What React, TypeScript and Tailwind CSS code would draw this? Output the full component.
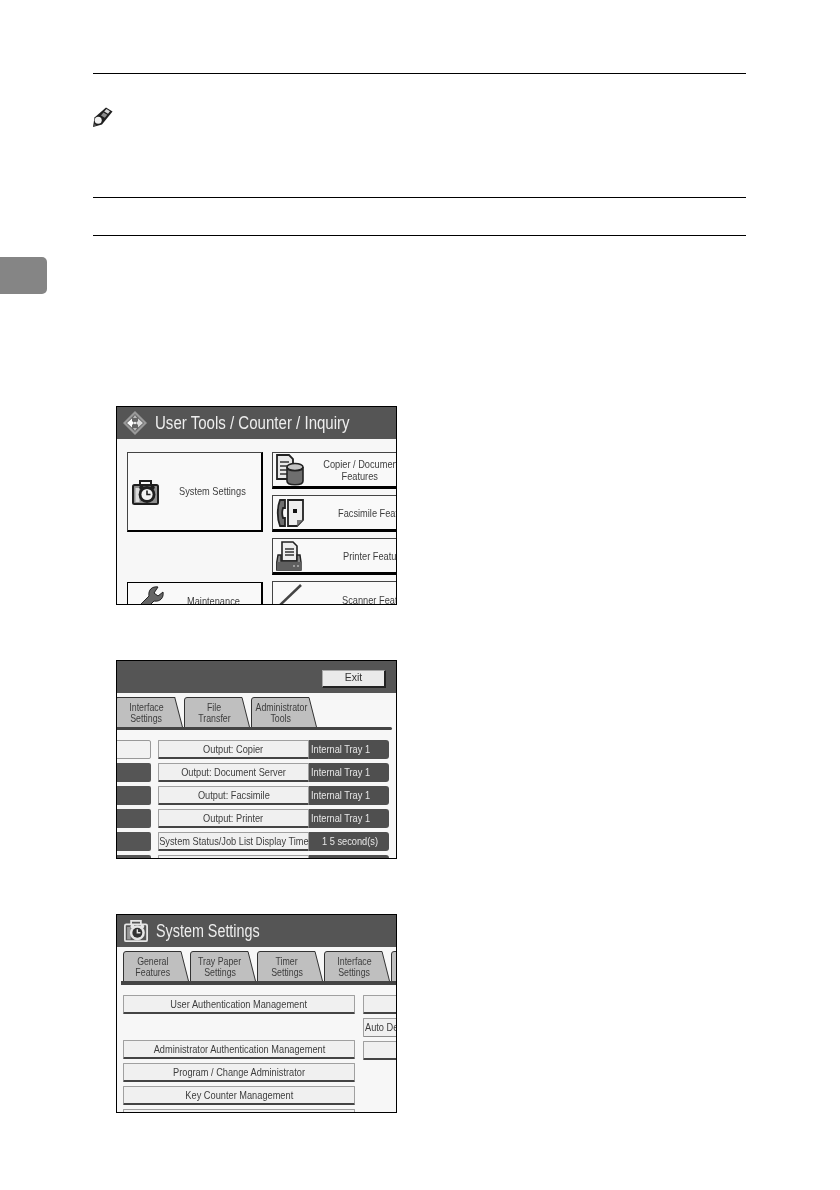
import type { ReactNode } from "react";

function Pencil() {
  return (
    <svg width="20" height="20" viewBox="0 0 20 20" className="block">
      <path d="M13 0.5 L19.5 4.5 L9 17.5 L0 20 L1.5 10.5 Z" fill="#1f1f1f" />
      <path d="M13.5 2 L17 4.2 L15 6.8 L11.2 4.6 Z" fill="#d8d8d8" />
      <path d="M10.5 5.5 L14.3 7.8 L11.8 10.8 L8 8.6 Z" fill="#8c8c8c" />
      <circle cx="5.2" cy="13.2" r="3.5" fill="#f2f2f2" />
      <path d="M0.5 19.5 L1.5 16.5 L3.5 18.5 Z" fill="#555" />
    </svg>
  );
}

function DiamondIcon() {
  return (
    <svg width="24" height="24" viewBox="0 0 24 24" className="block">
      <path d="M12 0 L24 12 L12 24 L0 12 Z" fill="#9a9a9a" />
      <path d="M12 3 L21 12 L12 21 L3 12 Z" fill="#666" />
      <path d="M4 12 L9 7.5 L9 10 L11 12 L9 14 L9 16.5 Z" fill="#fff" />
      <path d="M20 12 L15 7.5 L15 10 L13 12 L15 14 L15 16.5 Z" fill="#ddd" />
      <path d="M12 4 L14 7 L10 7 Z M12 20 L14 17 L10 17 Z" fill="#bbb" />
      <circle cx="12" cy="12" r="1.2" fill="#eee" />
    </svg>
  );
}

function CaseClock({ size = 27, light = false }: { size?: number; light?: boolean }) {
  const edge = light ? "#e6e6e6" : "#1f1f1f";
  return (
    <svg width={size} height={size} viewBox="0 0 27 27" className="block">
      <path d="M8 6 V2 H19 V6" fill="none" stroke={edge} strokeWidth="2" />
      <rect x="1" y="6" width="25" height="19" rx="1.5" fill={light ? "#555" : "#8f8f8f"} stroke={edge} strokeWidth="2" />
      <rect x="3.5" y="9" width="4" height="14" fill={light ? "#999" : "#ddd"} />
      <circle cx="15" cy="15.5" r="8.4" fill={edge} />
      <circle cx="15" cy="15.5" r="5.6" fill={light ? "#333" : "#f2f2f2"} />
      <path d="M15 11.5 V15.5 H18.5" fill="none" stroke={edge} strokeWidth="1.6" />
      <circle cx="9.5" cy="8.5" r="2.2" fill={edge} />
      <circle cx="20.5" cy="8.5" r="2.2" fill={edge} />
    </svg>
  );
}

function DocDbIcon() {
  return (
    <svg width="28" height="32" viewBox="0 0 28 32" className="block">
      <path d="M1 1 H13 L17 5 V25 H1 Z" fill="#e8e8e8" stroke="#222" strokeWidth="1.8" />
      <path d="M4 8 H13 M4 12 H11 M4 16 H11 M4 20 H11" stroke="#333" strokeWidth="1.6" />
      <ellipse cx="19" cy="13" rx="8" ry="3.5" fill="#c4c4c4" stroke="#222" strokeWidth="1.6" />
      <path d="M11 13 V27 C11 32 27 32 27 27 V13 C27 18 11 18 11 13 Z" fill="#6e6e6e" stroke="#222" strokeWidth="1.6" />
    </svg>
  );
}

function FaxIcon() {
  return (
    <svg width="28" height="28" viewBox="0 0 28 28" className="block">
      <path d="M9 1 H4 C1 8 1 20 4 27 H9 V19 H7 C6 16 6 12 7 9 H9 Z" fill="#6e6e6e" stroke="#222" strokeWidth="1.8" />
      <path d="M12 1 H27 V21 L21 27 H12 Z" fill="#eee" stroke="#222" strokeWidth="1.8" />
      <path d="M27 21 H21 V27 Z" fill="#777" />
      <rect x="17" y="10" width="4" height="4" fill="#111" />
    </svg>
  );
}

function PrinterIcon() {
  return (
    <svg width="26" height="30" viewBox="0 0 26 30" className="block">
      <path d="M6 1 H17 L21 5 V20 H6 Z" fill="#eee" stroke="#222" strokeWidth="1.6" />
      <path d="M9 8 H18 M9 11 H18 M9 14 H18" stroke="#333" strokeWidth="1.4" />
      <path d="M5 14 H2 L0.8 21 V29 H25 V21 L24 14 H21 V20 H5 Z" fill="#888" stroke="#222" strokeWidth="1.4" />
      <path d="M1 21 H25 V29 H1 Z" fill="#5f5f5f" />
      <path d="M17 25 H19 M21 25 H23" stroke="#ddd" strokeWidth="1.2" />
    </svg>
  );
}

function WrenchIcon() {
  return (
    <svg width="24" height="24" viewBox="0 0 24 24" className="block">
      <path d="M23 6 L18 10 L14 7 L18 1 C12 0 8 4 9 10 L1 18 C-1 21 3 25 6 23 L14 15 C20 16 24 12 23 6 Z" fill="#666" stroke="#222" strokeWidth="1" />
    </svg>
  );
}

function ScannerIcon() {
  return (
    <svg width="30" height="24" viewBox="0 0 30 24" className="block">
      <path d="M2 23 L25 1" stroke="#444" strokeWidth="2.5" />
      <path d="M0 23 H30" stroke="#444" strokeWidth="3" />
    </svg>
  );
}

// the panel font is much narrower than anything installed
function Narrow({ children, left }: { children: ReactNode; left?: boolean }) {
  return (
    <span className={`inline-block whitespace-nowrap scale-x-[0.88] ${left ? "origin-left" : "origin-center"}`}>
      {children}
    </span>
  );
}

function Screen({ children }: { children: ReactNode }) {
  return (
    <div className="ml-[116px] w-[281px] h-[199px] border border-black bg-[#f7f7f7] overflow-hidden text-[#3d3d3d] blur-[0.45px]">
      {children}
    </div>
  );
}

function ScreenHeader({ children }: { children?: ReactNode }) {
  return <div className="h-[32px] bg-[#555555] text-[#eeeeee] flex items-center">{children}</div>;
}

function Tab({ label, second, width }: { label: string; second: string; width: number }) {
  return (
    <div className="relative h-[30px] shrink-0 text-center text-[10px] leading-[11px] pt-[5px]" style={{ width }}>
      <svg className="absolute inset-0 w-full h-full" viewBox="0 0 66 30" preserveAspectRatio="none">
        <path d="M0.5 30 V3 Q0.5 0.5 3 0.5 H58 L65.5 30" fill="#bfbfbf" stroke="#333" strokeWidth="1" />
      </svg>
      <div className="relative pr-[6px]">
        <div>
          <Narrow>{label}</Narrow>
        </div>
        <div>
          <Narrow>{second}</Narrow>
        </div>
      </div>
    </div>
  );
}

function LightButton({ children, className, left }: { children?: ReactNode; className: string; left?: boolean }) {
  return (
    <div className={`h-[19px] pt-px bg-[#f0f0f0] border border-[#a0a0a0] border-b-2 border-b-[#444] rounded-[1px] flex items-center justify-center text-[10.5px] whitespace-nowrap ${className}`}>
      {children && <Narrow left={left}>{children}</Narrow>}
    </div>
  );
}

function MenuButton({ icon, children }: { icon: ReactNode; children: ReactNode }) {
  return (
    <div className="h-[37px] w-[150px] shrink-0 bg-[#f9f9f9] border border-[#444] border-b-[3px] border-b-black flex items-center text-[10.5px] leading-[12px] whitespace-nowrap">
      <div className="w-[42px] pl-[3px] shrink-0">{icon}</div>
      {children}
    </div>
  );
}

function OutputRow({ label, value, first, spaced }: { label: string; value: string; first?: boolean; spaced?: boolean }) {
  return (
    <div className="flex h-[19px] gap-[7px]">
      <div className={`w-[35px] -ml-px rounded-r-[2px] ${first ? "bg-[#f2f2f2] border border-[#999]" : "bg-[#555]"}`} />
      <LightButton className="w-[151px] shrink-0">{label}</LightButton>
      <div className={`w-[80px] -ml-[7px] pt-px bg-[#4f4f4f] text-[#e8e8e8] rounded-r-[3px] flex items-center text-[10.5px] whitespace-nowrap ${spaced ? "pl-[13px]" : "pl-[2px]"}`}>
        <Narrow left>{value}</Narrow>
      </div>
    </div>
  );
}

function UserToolsScreen() {
  return (
    <Screen>
      <ScreenHeader>
        <div className="ml-[6px] mr-[8px]">
          <DiamondIcon />
        </div>
        <span className="inline-block whitespace-nowrap text-[17.5px] origin-left scale-x-[0.86]">
          User Tools / Counter / Inquiry
        </span>
      </ScreenHeader>
      <div className="flex gap-[9px] pl-[10px] pt-[13px]">
        <div className="w-[136px] shrink-0">
          <div className="h-[80px] pt-px bg-[#f9f9f9] border border-[#444] border-r-2 border-b-2 border-r-black border-b-black flex items-center text-[10.5px]">
            <div className="w-[51px] pl-[4px] shrink-0">
              <CaseClock />
            </div>
            <Narrow left>System Settings</Narrow>
          </div>
          <div className="mt-[50px] h-[60px] bg-[#f9f9f9] border border-black border-r-2 flex items-start text-[10.5px]">
            <div className="w-[59px] pl-[12px] pt-[3px] shrink-0">
              <WrenchIcon />
            </div>
            <span className="pt-[11px]">
              <Narrow left>Maintenance</Narrow>
            </span>
          </div>
        </div>
        <div className="flex flex-col gap-[6px]">
          <MenuButton icon={<DocDbIcon />}>
            <div className="w-[84px] ml-[3px] pt-px text-center">
              <div>
                <Narrow>Copier / Document</Narrow>
              </div>
              <div>
                <Narrow>Features</Narrow>
              </div>
            </div>
          </MenuButton>
          <MenuButton icon={<FaxIcon />}>
            <span className="pl-[23px]">
              <Narrow left>Facsimile Features</Narrow>
            </span>
          </MenuButton>
          <MenuButton icon={<PrinterIcon />}>
            <span className="pl-[28px] pt-px">
              <Narrow left>Printer Features</Narrow>
            </span>
          </MenuButton>
          <div className="h-[37px] w-[150px] bg-[#f9f9f9] border border-[#444] flex items-start text-[10.5px] whitespace-nowrap">
            <div className="w-[42px] pl-[3px] pt-[2px] shrink-0">
              <ScannerIcon />
            </div>
            <span className="pl-[27px] pt-[11px]">
              <Narrow left>Scanner Features</Narrow>
            </span>
          </div>
        </div>
      </div>
    </Screen>
  );
}

function OutputScreen() {
  return (
    <Screen>
      <ScreenHeader>
        <div className="ml-[205px] mt-[3px] w-[64px] h-[18px] bg-[#eaeaea] border border-[#aaa] border-r-2 border-b-2 border-r-[#222] border-b-[#222] flex items-center justify-center text-[10.5px] text-[#333]">
          Exit
        </div>
      </ScreenHeader>
      <div className="flex pt-[4px] -ml-[2px] gap-[1px]">
        <Tab label="Interface" second="Settings" width={68} />
        <Tab label="File" second="Transfer" width={66} />
        <Tab label="Administrator" second="Tools" width={66} />
      </div>
      <div className="h-[3px] w-[275px] bg-[#444] rounded-r-full" />
      <div className="mt-[10px] flex flex-col gap-[4px]">
        <OutputRow first label="Output: Copier" value="Internal Tray 1" />
        <OutputRow label="Output: Document Server" value="Internal Tray 1" />
        <OutputRow label="Output: Facsimile" value="Internal Tray 1" />
        <OutputRow label="Output: Printer" value="Internal Tray 1" />
        <OutputRow spaced label="System Status/Job List Display Time" value="1 5 second(s)" />
        <OutputRow label="" value="" />
      </div>
    </Screen>
  );
}

function SystemSettingsScreen() {
  return (
    <Screen>
      <ScreenHeader>
        <div className="ml-[7px] mr-[8px]">
          <CaseClock size={24} light />
        </div>
        <span className="inline-block whitespace-nowrap text-[17.5px] origin-left scale-x-[0.82]">
          System Settings
        </span>
      </ScreenHeader>
      <div className="flex pt-[4px] pl-[6px] gap-[1px]">
        <Tab label="General" second="Features" width={66} />
        <Tab label="Tray Paper" second="Settings" width={66} />
        <Tab label="Timer" second="Settings" width={66} />
        <Tab label="Interface" second="Settings" width={66} />
        <Tab label="" second="" width={66} />
      </div>
      <div className="h-[4px] ml-[4px] bg-[#444]" />
      <div className="mt-[10px] pl-[6px] flex gap-[8px]">
        <div className="w-[232px] shrink-0 flex flex-col">
          <LightButton className="w-full">User Authentication Management</LightButton>
          <div className="h-[26px]" />
          <LightButton className="w-full mb-[4px]">Administrator Authentication Management</LightButton>
          <LightButton className="w-full mb-[4px]">Program / Change Administrator</LightButton>
          <LightButton className="w-full mb-[4px]">Key Counter Management</LightButton>
          <LightButton className="w-full" />
        </div>
        <div className="flex flex-col gap-[4px]">
          <LightButton className="w-[60px]" />
          <LightButton left className="w-[60px] !justify-start pl-[1px] !border-b !border-b-[#8a8a8a]">Auto Delete</LightButton>
          <LightButton className="w-[60px]" />
        </div>
      </div>
    </Screen>
  );
}

export default function App() {
  return (
    <div className="w-[840px] h-[1190px] bg-white overflow-hidden font-['Liberation_Sans',Arial,sans-serif]">
      <div className="pt-[73px] ml-[93px] w-[653px]">
        <div className="h-px bg-black" />
        <div className="mt-[33px]">
          <Pencil />
        </div>
        <div className="mt-[70px] h-px bg-black" />
        <div className="mt-[37px] h-px bg-black" />
      </div>
      <div className="mt-[21px] w-[47px] h-[37px] bg-[#858585] rounded-r-[5px]" />
      <div className="mt-[112px]">
        <UserToolsScreen />
      </div>
      <div className="mt-[55px]">
        <OutputScreen />
      </div>
      <div className="mt-[55px]">
        <SystemSettingsScreen />
      </div>
    </div>
  );
}
